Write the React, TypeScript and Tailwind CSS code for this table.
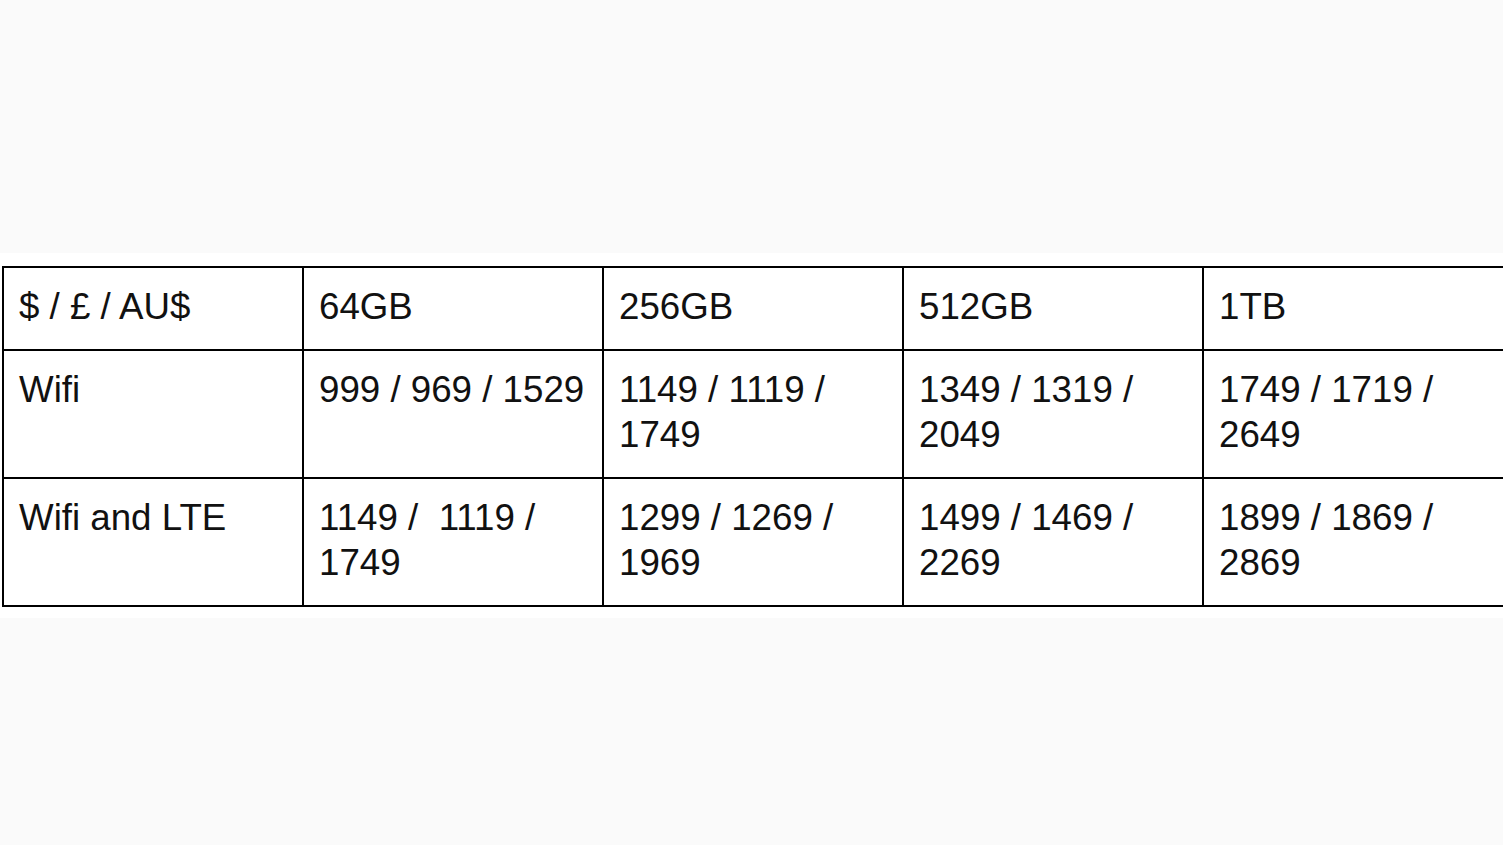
const header = ["$ / £ / AU$", "64GB", "256GB", "512GB", "1TB"];

const rows = [
  ["Wifi", "999 / 969 / 1529", "1149 / 1119 / 1749", "1349 / 1319 / 2049", "1749 / 1719 / 2649"],
  ["Wifi and LTE", "1149 /  1119 / 1749", "1299 / 1269 / 1969", "1499 / 1469 / 2269", "1899 / 1869 / 2869"],
];

function Cell({ text, last }: { text: string; last?: boolean }) {
  return (
    <div
      className={`border-r-2 border-b-2 border-black pl-[15px] pr-[12px] pt-4 pb-[20px] whitespace-pre-wrap leading-[45px] ${
        last ? "w-[301px]" : "w-[300px]"
      }`}
    >
      {text}
    </div>
  );
}

export default function App() {
  const all = [header, ...rows];
  return (
    <div className="min-h-screen w-full overflow-hidden bg-[#fafafa] pt-[253px]">
      <div className="bg-white pt-[13px] pb-[11px] overflow-hidden">
        <div
          className="ml-[2px] w-max border-t-2 border-l-2 border-black text-[36.7px] text-[#111]"
          style={{ fontFamily: '"Liberation Sans", Arial, sans-serif' }}
        >
          {all.map((r, i) => (
            <div key={i} className="flex">
              {r.map((c, j) => (
                <Cell key={j} text={c} last={j === r.length - 1} />
              ))}
            </div>
          ))}
        </div>
      </div>
    </div>
  );
}
